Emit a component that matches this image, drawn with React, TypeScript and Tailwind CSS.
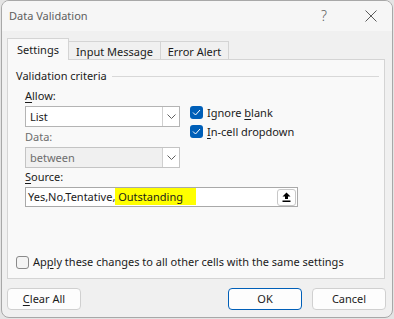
import React from "react";

const Chevron = () => (
  <svg width="9" height="5" viewBox="0 0 9 5" fill="none">
    <path d="M0.5 0.5 L4.5 4.5 L8.5 0.5" stroke="#606060" strokeWidth="1" />
  </svg>
);

const Check = () => (
  <div className="w-[13px] h-[13px] rounded-[3px] bg-[#005fb8] flex items-center justify-center">
    <svg width="9" height="7" viewBox="0 0 9 7" fill="none">
      <path d="M1 3.5 L3.5 6 L8 1" stroke="#ffffff" strokeWidth="1" />
    </svg>
  </div>
);

export default function App() {
  return (
    <div
      className="w-[394px] h-[319px] bg-[#e4e4e4] text-[11px] text-[#1b1b1b]"
      style={{ fontFamily: '"Noto Sans", "Open Sans", sans-serif' }}
    >
      <div className="ml-[1px] w-[392px] h-[318px] rounded-[8px] border border-[#a8a8a8] bg-[#f0f0f0] flex flex-col overflow-hidden">
        {/* Title bar */}
        <div className="h-[30px] flex items-center pl-[7px] bg-[#f6f6f6] shrink-0">
          <span className="text-[#5e5e5e] leading-[16px]">Data Validation</span>
          <span className="ml-auto mr-[38px] text-[14px] leading-[16px] text-[#606060] font-light">?</span>
          <svg width="12" height="12" viewBox="0 0 12 12" className="mr-[15px]">
            <path d="M0.5 0.5 L11.5 11.5 M11.5 0.5 L0.5 11.5" stroke="#5a5a5a" strokeWidth="1" />
          </svg>
        </div>

        {/* Body */}
        <div className="flex flex-col pl-[5px] pr-[6px]">
          {/* Tabs */}
          <div className="mt-[7px] h-[22px] -mb-px flex items-end relative z-10">
            <div className="w-[62px] h-[22px] border border-b-0 border-[#d4d4d4] bg-[#f9f9f9] flex items-center justify-center relative z-10 leading-[16px] pt-[1px]">
              Settings
            </div>
            <div className="-ml-px w-[93px] h-[19px] border border-[#d4d4d4] bg-[#f0f0f0] flex items-center justify-center leading-[16px] pt-[2px]">
              Input Message
            </div>
            <div className="-ml-px w-[69px] h-[19px] border border-[#d4d4d4] bg-[#f0f0f0] flex items-center justify-center leading-[16px] pt-[2px]">
              Error Alert
            </div>
          </div>

          {/* Panel */}
          <div className="w-[378px] h-[220px] border border-[#d4d4d4] bg-[#f9f9f9] flex flex-col">
            <div className="mt-[8px] h-[16px] flex items-center pl-[8px] pr-[5px]">
              <span className="leading-[16px]">Validation criteria</span>
              <div className="ml-[5px] flex-1 h-px bg-[#d8d8d8]" />
            </div>

            <div className="pl-[17px] mt-[4px] flex flex-col">
              <div className="flex">
                <div className="w-[155px] flex flex-col">
                  <div className="h-[16px] leading-[16px]">
                    <span className="underline underline-offset-2">A</span>llow:
                  </div>
                  <div className="mt-[2px] h-[21px] border border-[#b4b4b4] bg-white flex items-center">
                    <span className="pl-[4px] flex-1 leading-[16px]">List</span>
                    <div className="w-[17px] h-full border-l border-[#d0d0d0] flex items-center justify-center">
                      <Chevron />
                    </div>
                  </div>
                  <div className="mt-[2px] h-[16px] leading-[16px] text-[#6d6d6d]">Data:</div>
                  <div className="mt-[2px] h-[21px] border border-[#c4c4c4] bg-[#f0f0f0] flex items-center">
                    <span className="pl-[4px] flex-1 leading-[16px] text-[#6d6d6d]">between</span>
                    <div className="w-[17px] h-full border-l border-[#d0d0d0] bg-white flex items-center justify-center">
                      <Chevron />
                    </div>
                  </div>
                </div>
                <div className="ml-[10px] pt-[18px] flex flex-col gap-[6px]">
                  <div className="flex items-center gap-[4px] h-[13px]">
                    <Check />
                    <span className="leading-[16px]">
                      Ignore <span className="underline underline-offset-2">b</span>lank
                    </span>
                  </div>
                  <div className="flex items-center gap-[4px] h-[13px]">
                    <Check />
                    <span className="leading-[16px]">
                      <span className="underline underline-offset-2">I</span>n-cell dropdown
                    </span>
                  </div>
                </div>
              </div>
              <div className="mt-[1px] h-[16px] leading-[16px]">
                <span className="underline underline-offset-2">S</span>ource:
              </div>
              <div className="mt-[2px] w-[273px] h-[20px] border border-[#a9a9a9] bg-white flex items-center">
                <span className="pl-[2px] flex-1 leading-[16px] whitespace-pre">
                  Yes,No,Tentative,<span className="bg-[#ffff00] pr-[13px] py-[1px]"> Outstanding</span>
                </span>
                <div className="mr-[1px] w-[19px] h-[17px] rounded-[3px] border border-[#c8c8c8] bg-white flex items-center justify-center">
                  <svg width="9" height="10" viewBox="0 0 9 10">
                    <path d="M4.5 0.5 L8.5 4.5 L6 4.5 L6 7 L3 7 L3 4.5 L0.5 4.5 Z" fill="#000" />
                    <rect x="0.5" y="8.5" width="8" height="1.5" fill="#000" />
                  </svg>
                </div>
              </div>
            </div>

            <div className="mt-auto mb-[8px] h-[16px] pl-[8px] flex items-center gap-[4px]">
              <div className="w-[13px] h-[13px] rounded-[3px] border border-[#8a8a8a] bg-[#f4f4f4]" />
              <span className="leading-[16px]">
                Ap<span className="underline underline-offset-2">p</span>ly these changes to all other cells with the same settings
              </span>
            </div>
          </div>

          {/* Buttons */}
          <div className="mt-[9px] w-[379px] flex items-center">
            <div className="w-[74px] h-[22px] rounded-[4px] border border-[#d0d0d0] bg-[#fdfdfd] flex items-center justify-center leading-[16px]">
              <span>
                <span className="underline underline-offset-2">C</span>lear All
              </span>
            </div>
            <div className="ml-auto w-[74px] h-[22px] rounded-[4px] border border-[#005fb8] bg-[#fdfdfd] flex items-center justify-center leading-[16px]">
              OK
            </div>
            <div className="ml-[10px] w-[74px] h-[22px] rounded-[4px] border border-[#d0d0d0] bg-[#fdfdfd] flex items-center justify-center leading-[16px]">
              Cancel
            </div>
          </div>
        </div>
      </div>
    </div>
  );
}
